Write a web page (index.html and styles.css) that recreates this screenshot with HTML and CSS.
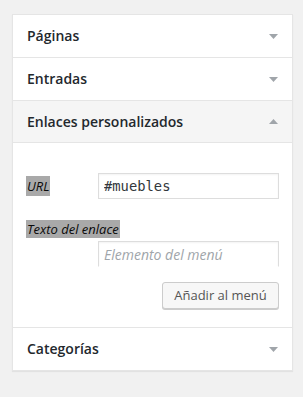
FILE: index.html
```html
<!DOCTYPE html>
<html lang="es">
<head>
<meta charset="utf-8">
<title>Menú</title>
<link rel="stylesheet" href="styles.css">
</head>
<body>
<div class="panel">
  <section class="box">
    <div class="box-head"><h3>Páginas</h3><svg class="arrow" width="9" height="5" viewBox="0 0 9 5"><polygon points="0,0 9,0 4.5,5"/></svg></div>
  </section>
  <section class="box">
    <div class="box-head"><h3>Entradas</h3><svg class="arrow" width="9" height="5" viewBox="0 0 9 5"><polygon points="0,0 9,0 4.5,5"/></svg></div>
  </section>
  <section class="box open">
    <div class="box-head"><h3>Enlaces personalizados</h3><svg class="arrow" width="9" height="5" viewBox="0 0 9 5"><polygon points="0,5 9,5 4.5,0"/></svg></div>
    <div class="box-body">
      <div class="row url-row">
        <span class="label">URL</span>
        <input class="field mono" type="text" value="#muebles">
      </div>
      <div class="row text-row">
        <span class="label">Texto del enlace</span>
        <input class="field clip" type="text" placeholder="Elemento del menú">
      </div>
      <div class="actions">
        <button class="btn" type="button">Añadir al menú</button>
      </div>
    </div>
  </section>
  <section class="box">
    <div class="box-head"><h3>Categorías</h3><svg class="arrow" width="9" height="5" viewBox="0 0 9 5"><polygon points="0,0 9,0 4.5,5"/></svg></div>
  </section>
</div>
</body>
</html>
```
FILE: styles.css
```css
* { box-sizing: border-box; }
html, body { margin: 0; padding: 0; }
body {
  background: #f1f1f1;
  font-family: "Open Sans", "Noto Sans", sans-serif;
  color: #23282d;
  width: 303px;
  height: 397px;
  overflow: hidden;
}
.panel {
  margin: 14px 0 0 12px;
  width: 281px;
  background: #fff;
  border: 1px solid #e5e5e5;
  box-shadow: 0 1px 1px rgba(0,0,0,0.06);
}
.box + .box { border-top: 1px solid #e5e5e5; }
.box-head {
  height: 42px;
  display: flex;
  align-items: center;
  justify-content: space-between;
  padding: 0 14px 0 14px;
}
.open .box-head { background: #f5f5f5; border-bottom: 1px solid #e5e5e5; }
.box-head h3 {
  margin: 0;
  font-size: 14px;
  font-weight: 600;
  line-height: 1;
}
.arrow { fill: #a0a5aa; display: block; }
.box-body {
  padding: 30px 13px 0 13px;
  height: 184px;
}
.row { display: flex; }
.label {
  font-style: italic;
  font-size: 13px;
  line-height: 20px;
  background: #a9a9a9;
  color: #0a0a0a;
  padding: 0 1px;
}
.url-row {
  align-items: center;
  justify-content: space-between;
}
.field {
  width: 181px;
  height: 26px;
  border: 1px solid #ddd;
  background: #fff;
  box-shadow: inset 0 1px 2px rgba(0,0,0,0.05);
  padding: 0 5px;
  font-family: "Open Sans", sans-serif;
  font-size: 14px;
  color: #32373c;
  outline: none;
  margin: 0;
}
.mono {
  font-family: "DejaVu Sans Mono", monospace;
  font-size: 13.8px;
}
.text-row {
  flex-direction: column;
  align-items: flex-start;
  margin-top: 21px;
}
.text-row .label { line-height: 18px; }
.text-row .field {
  margin-left: 72px;
  margin-top: 3px;
  border-bottom-color: transparent;
  font-style: italic;
}
.field::placeholder { color: #a0a5aa; font-style: italic; }
.actions {
  display: flex;
  justify-content: flex-end;
  margin-top: 15px;
}
.btn {
  height: 27px;
  padding: 0 10px;
  border: 1px solid #ccc;
  border-radius: 3px;
  background: #f7f7f7;
  box-shadow: 0 1px 0 #ccc;
  color: #555;
  font-family: "Open Sans", sans-serif;
  font-size: 13px;
  line-height: 25px;
  width: 117px;
}
```
